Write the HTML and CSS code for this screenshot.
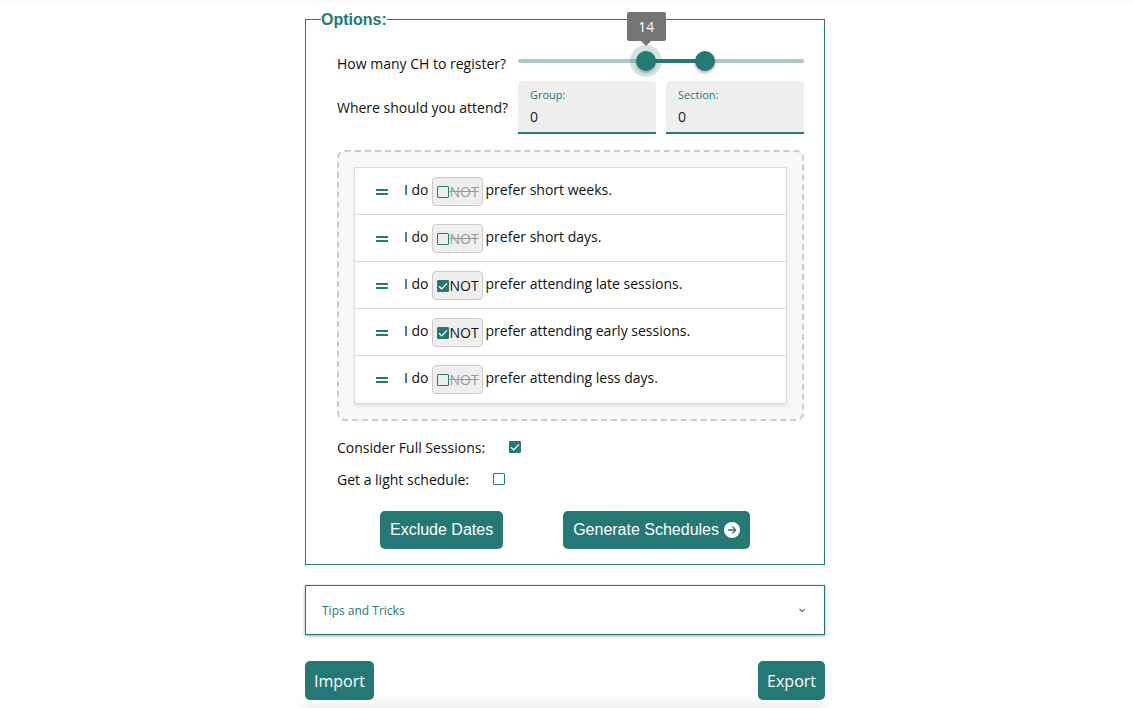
FILE: index.html
```html
<!DOCTYPE html>
<html lang="en">
<head>
<meta charset="utf-8">
<meta name="viewport" content="width=device-width, initial-scale=1">
<title>Schedule options</title>
<link rel="stylesheet" href="styles.css">
</head>
<body>
<div class="top-bar"></div>
<main class="page">
  <form class="form">
    <fieldset class="options">
      <legend class="legend">Options:</legend>

      <div class="fields">
        <label class="question" for="ch-min">How many CH to register?</label>
        <div class="slider">
          <div class="track"></div>
          <input class="range range-active" id="ch-min" type="range" min="1" max="30" value="14">
          <input class="range" type="range" min="1" max="30" value="20" aria-label="Maximum CH">
          <output class="tooltip" for="ch-min">14</output>
        </div>

        <span class="question attend">Where should you attend?</span>
        <div class="attendance">
          <label class="text-field"><span class="field-label">Group:</span><input class="field-input" type="text" value="0"></label>
          <label class="text-field"><span class="field-label">Section:</span><input class="field-input" type="text" value="0"></label>
        </div>
      </div>

      <div class="drop-zone">
        <ul class="preferences">
          <li class="preference">
            <svg class="handle" viewBox="0 0 12 6"><path d="M0 1h12M0 5h12"/></svg>
            <span class="words">I do</span>
            <label class="toggle"><input class="check" type="checkbox"><span class="not">NOT</span></label>
            <span class="words">prefer short weeks.</span>
          </li>
          <li class="preference">
            <svg class="handle" viewBox="0 0 12 6"><path d="M0 1h12M0 5h12"/></svg>
            <span class="words">I do</span>
            <label class="toggle"><input class="check" type="checkbox"><span class="not">NOT</span></label>
            <span class="words">prefer short days.</span>
          </li>
          <li class="preference">
            <svg class="handle" viewBox="0 0 12 6"><path d="M0 1h12M0 5h12"/></svg>
            <span class="words">I do</span>
            <label class="toggle"><input class="check" type="checkbox" checked><span class="not">NOT</span></label>
            <span class="words">prefer attending late sessions.</span>
          </li>
          <li class="preference">
            <svg class="handle" viewBox="0 0 12 6"><path d="M0 1h12M0 5h12"/></svg>
            <span class="words">I do</span>
            <label class="toggle"><input class="check" type="checkbox" checked><span class="not">NOT</span></label>
            <span class="words">prefer attending early sessions.</span>
          </li>
          <li class="preference">
            <svg class="handle" viewBox="0 0 12 6"><path d="M0 1h12M0 5h12"/></svg>
            <span class="words">I do</span>
            <label class="toggle"><input class="check" type="checkbox"><span class="not">NOT</span></label>
            <span class="words">prefer attending less days.</span>
          </li>
        </ul>
      </div>

      <div class="extras">
        <label class="extra">Consider Full Sessions:<input class="check" type="checkbox" checked></label>
        <label class="extra">Get a light schedule:<input class="check" type="checkbox"></label>
      </div>

      <div class="actions">
        <button class="button button-main" type="button">Exclude Dates</button>
        <button class="button button-main" type="button">Generate Schedules
          <svg class="arrow" viewBox="0 0 16 16"><circle cx="8" cy="8" r="8"/><path d="M4 8h7.500M8.500 4.800 11.700 8l-3.200 3.200"/></svg>
        </button>
      </div>
    </fieldset>
  </form>

  <button class="tips" type="button">Tips and Tricks
    <svg class="chevron" viewBox="0 0 8 6"><path d="M1.500 1 4 3.500 6.500 1"/></svg>
  </button>

  <div class="transfer">
    <button class="button button-file" type="button">Import</button>
    <button class="button button-file" type="button">Export</button>
  </div>
</main>
<div class="bottom-bar"></div>
</body>
</html>
```
FILE: styles.css
```css
:root {
  --teal: #267875;
  --teal-light: #adcac9;
  --line: #dcdcdc;
}

* { box-sizing: border-box; }

body {
  margin: 0;
  padding: 10px 4px 0 0;
  background: #fff;
  color: #111;
  font: 14px/20px "Open Sans", "Noto Sans", sans-serif;
  overflow: hidden;
}

.top-bar,
.bottom-bar {
  position: fixed;
  height: 10px;
}

.top-bar {
  inset: -10px 0 auto;
  box-shadow: 0 0 5px rgba(0, 0, 0, 0.06);
}

.page {
  width: 100%;
  max-width: 520px;
  margin: 0 auto;
}

.options {
  min-width: 0;
  margin: 0;
  padding: 0 20px 15px 31px;
  border: 1px solid var(--teal);
}

.legend {
  margin-left: -16px;
  padding: 0;
  color: var(--teal);
  font: bold 16px/19px "Liberation Sans", Arial, sans-serif;
}

.fields {
  display: grid;
  grid-template-columns: 165px 1fr;
  column-gap: 16px;
  padding-top: 22px;
}

.question { white-space: nowrap; line-height: 26px; }
.attend { align-self: center; }

.slider { position: relative; height: 30px; }

.track {
  position: absolute;
  inset: 8px 0 auto;
  height: 4px;
  border-radius: 2px;
  background: linear-gradient(to right, var(--teal-light) 45%, var(--teal) 45% 65%, var(--teal-light) 65%);
}

.range {
  position: absolute;
  left: -10px;
  width: calc(100% + 20px);
  height: 20px;
  margin: 0;
  appearance: none;
  background: none;
  pointer-events: none;
}

.range::-webkit-slider-thumb {
  appearance: none;
  width: 20px;
  height: 20px;
  border-radius: 50%;
  background: var(--teal);
  box-shadow: 0 2px 3px rgba(0, 0, 0, 0.3);
  pointer-events: auto;
}

.range-active::-webkit-slider-thumb {
  box-shadow: 0 0 0 6px rgba(38, 120, 117, 0.2), 0 2px 3px rgba(0, 0, 0, 0.3);
}

.tooltip {
  position: absolute;
  bottom: 40px;
  left: 45%;
  width: 39px;
  margin-left: -20px;
  border-radius: 2px;
  background: #757575;
  color: #fff;
  line-height: 29px;
  text-align: center;
}

.tooltip::after {
  content: "";
  position: absolute;
  top: 100%;
  left: 50%;
  margin-left: -5px;
  border: 5px solid transparent;
  border-top-color: #757575;
}

.attendance {
  display: grid;
  grid-template-columns: 1fr 1fr;
  gap: 10px;
}

.text-field {
  display: flex;
  flex-direction: column;
  padding: 6px 12px 3px;
  border-bottom: 2px solid var(--teal);
  border-radius: 4px 4px 0 0;
  background: #efefef;
}

.field-label { color: var(--teal); font-size: 11px; line-height: 16px; }

.field-input {
  width: 100%;
  height: 26px;
  padding: 0;
  border: 0;
  outline: 0;
  background: none;
  color: #222;
  font: inherit;
}

.drop-zone {
  margin-top: 16px;
  padding: 15px;
  border: 2px dashed #ccc;
  border-radius: 8px;
  background: #f9f9f9;
}

.preferences {
  margin: 0;
  padding: 0;
  border: 1px solid var(--line);
  background: #fff;
  box-shadow: 0 2px 3px rgba(0, 0, 0, 0.1);
  list-style: none;
}

.preference {
  display: flex;
  align-items: center;
  gap: 3px;
  height: 47px;
  padding-left: 21px;
  border-bottom: 1px solid var(--line);
}

.preference:last-child { border-bottom-color: transparent; }

.words { padding-bottom: 2px; }

.handle {
  width: 12px;
  height: 6px;
  margin: 2px 13px 0 0;
  fill: none;
  stroke: var(--teal);
  stroke-width: 2;
}

.toggle {
  display: flex;
  align-items: center;
  width: 51px;
  height: 29px;
  padding: 2px 4px 0;
  border: 1px solid #ccc;
  border-radius: 4px;
  background: #efefef;
}

.not { margin-left: 1px; color: #999; text-decoration: line-through; }
.check:checked + .not { color: #111; text-decoration: none; }

.check {
  flex: none;
  width: 12px;
  height: 12px;
  margin: 0;
  appearance: none;
  border: 1px solid var(--teal);
  border-radius: 1px;
}

.check:checked {
  background: var(--teal) url("data:image/svg+xml,%3Csvg xmlns='http://www.w3.org/2000/svg' viewBox='0 0 10 10'%3E%3Cpath d='M1 5.200 3.700 7.900 9 2.400' fill='none' stroke='white' stroke-width='1.300'/%3E%3C/svg%3E") center / 10px;
}

.extras { padding-top: 11px; }

.extra {
  display: flex;
  align-items: center;
  gap: 24px;
  height: 32px;
}

.extra .check { margin-bottom: 2px; }

.actions {
  display: flex;
  justify-content: center;
  gap: 60px;
  margin: 15px 0 0 -11px;
}

.button {
  border: 0;
  border-radius: 5px;
  background: var(--teal);
  color: #fff;
}

.button-main {
  display: flex;
  align-items: center;
  gap: 5px;
  padding: 0 10px;
  font: 16px/38px "Liberation Sans", Arial, sans-serif;
}

.button-file {
  padding: 2px 9px 0;
  font: 16px/37px "Open Sans", "Noto Sans", sans-serif;
}

.arrow { width: 16px; height: 16px; fill: #fff; }
.arrow path { fill: none; stroke: var(--teal); stroke-width: 1.3; }

.tips {
  display: flex;
  align-items: center;
  justify-content: space-between;
  width: 100%;
  height: 50px;
  margin-top: 20px;
  padding: 2px 18px 0 16px;
  border: 1px solid var(--teal);
  background: #fff;
  box-shadow: 0 1px 3px rgba(0, 0, 0, 0.35);
  color: var(--teal);
  font: 12px/20px "Open Sans", "Noto Sans", sans-serif;
}

.chevron { width: 8px; height: 6px; fill: none; stroke: #777; stroke-width: 1.3; }

.transfer {
  display: flex;
  justify-content: space-between;
  margin-top: 26px;
}

.bottom-bar {
  inset: auto 4px -10px 0;
  max-width: 520px;
  margin: 0 auto;
  box-shadow: 0 0 16px rgba(0, 0, 0, 0.16);
}
```
